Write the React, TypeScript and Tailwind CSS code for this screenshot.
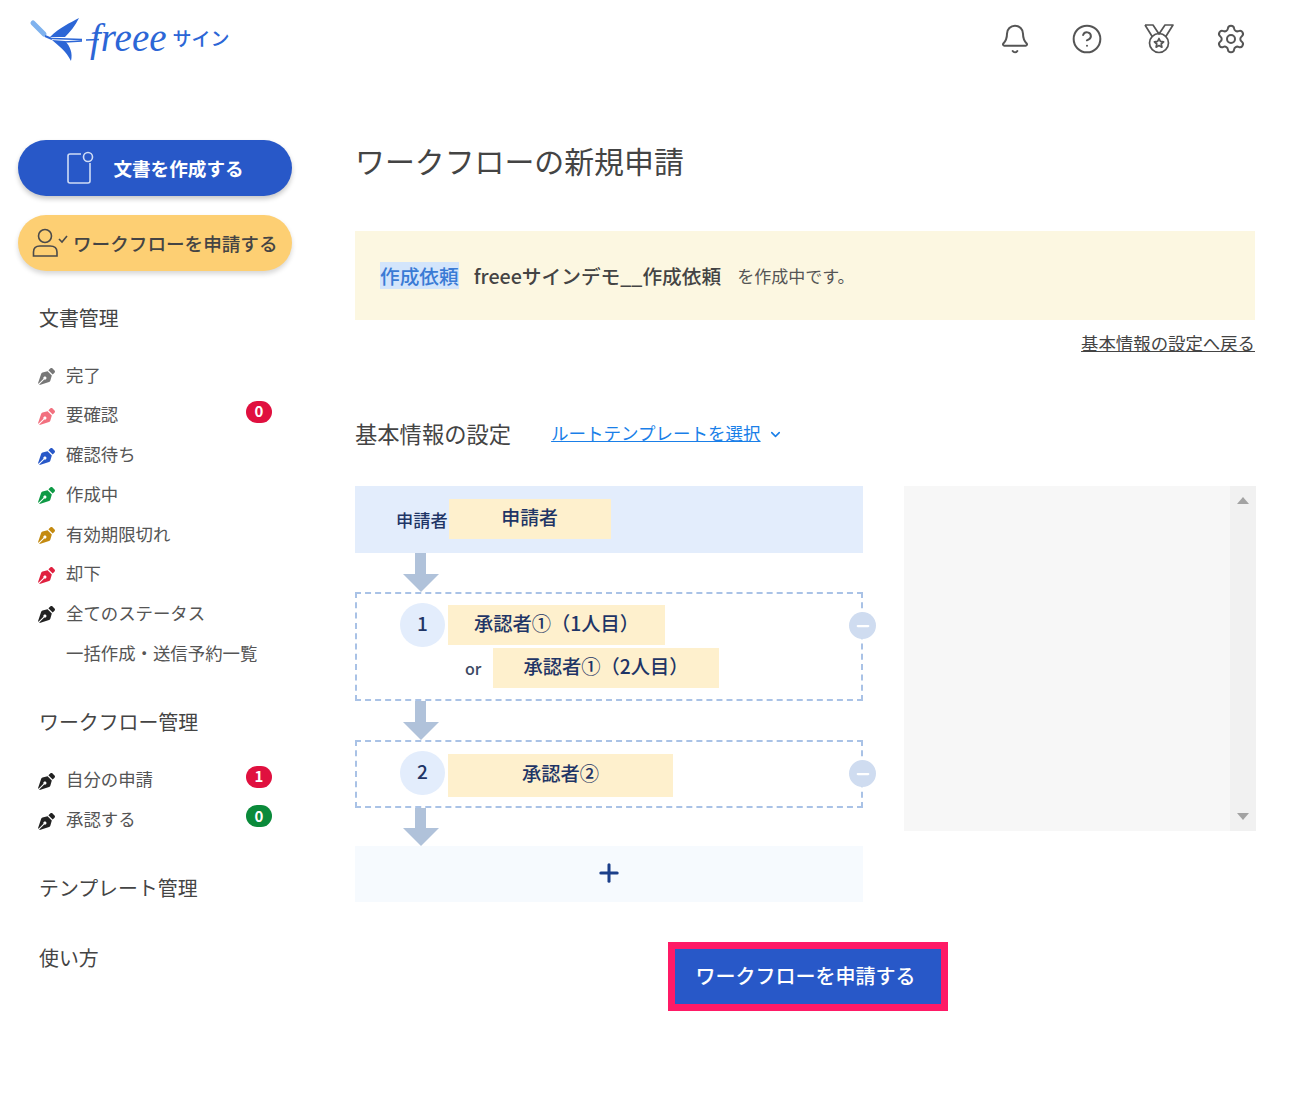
import { Bell, ChevronDown, CircleHelp, Minus, Plus, Settings } from "lucide-react";
import { FaPenNib } from "react-icons/fa";

const jp = "font-['Noto_Sans_CJK_JP','Noto_Sans',sans-serif]";

function Logo() {
  return (
    <div className="flex items-start pl-[28px] pt-[15px]">
      <svg width="72" height="48" viewBox="0 0 72 48" fill="none">
        <path d="M5 8 L16 19" stroke="#7fb2ee" strokeWidth="5" strokeLinecap="round" />
        <path d="M17 21 L24 24" stroke="#2c66d6" strokeWidth="2" />
        <path d="M22 22 C32 12 42 8 51 3 C47 11 42 17 37 22 Z" fill="#2c66d6" />
        <path d="M24 25 C31 31 38 36 43 46 C45 38 42 31 37 26 Z" fill="#2c66d6" />
        <path d="M24 23.5 L54 24.5 M36 27 L54 26 M58 25 L71 24.5" stroke="#2c66d6" strokeWidth="1.4" />
      </svg>
      <div className="-ml-[10px] flex items-center">
        <span className="font-['Liberation_Serif',serif] text-[39px] leading-[46px] italic text-[#2c66d6]">
          freee
        </span>
        <span className={`${jp} ml-[6px] text-[19px] leading-[46px] font-medium text-[#2c66d6]`}>サイン</span>
      </div>
    </div>
  );
}

function MedalIcon() {
  return (
    <svg width="32" height="32" viewBox="0 0 32 32" fill="none" stroke="#555" strokeWidth="1.7" strokeLinejoin="round">
      <path d="M2 2 H10 L16 11 L22 2 H30 L22.5 14 M2 2 L9.5 14" />
      <circle cx="16" cy="20" r="9.5" />
      <path d="M16 15.5 L17.4 18.4 L20.6 18.8 L18.2 21 L18.9 24.2 L16 22.6 L13.1 24.2 L13.8 21 L11.4 18.8 L14.6 18.4 Z" />
    </svg>
  );
}

function Header() {
  return (
    <header className="flex h-[140px] justify-between">
      <Logo />
      <div className="flex gap-[40px] pr-[52px] pt-[23px] text-[#555]">
        <Bell size={32} strokeWidth={1.5} />
        <CircleHelp size={32} strokeWidth={1.5} />
        <MedalIcon />
        <Settings size={32} strokeWidth={1.5} />
      </div>
    </header>
  );
}

function StatusRow({ label, color, badge, badgeColor }: { label: string; color?: string; badge?: string; badgeColor?: string }) {
  return (
    <div className="relative flex h-[39.7px] items-center pl-[38px]">
      <span className="flex w-[28px] justify-start pt-[4px]">
        {color && <FaPenNib size={17} color={color} />}
      </span>
      <span className="text-[17.4px] text-[#555]">{label}</span>
      {badge && (
        <span
          className="absolute left-[246px] top-[6px] flex h-[22px] w-[26px] items-center justify-center rounded-full text-[15px] font-bold text-white"
          style={{ backgroundColor: badgeColor }}
        >
          {badge}
        </span>
      )}
    </div>
  );
}

function SideHeading({ children, className }: { children: string; className: string }) {
  return (
    <div className={`flex h-[40px] items-center pb-[1px] pl-[39px] text-[19.9px] text-[#444] ${className}`}>{children}</div>
  );
}

function Sidebar() {
  return (
    <aside className="w-[355px] shrink-0">
      <div className="ml-[18px] flex h-[56px] w-[274px] items-center justify-center gap-[19px] rounded-full bg-[#2858c8] shadow-[0_3px_5px_rgba(0,0,0,0.22)]">
        <svg width="28" height="34" viewBox="0 0 28 34" fill="none" stroke="#cfdcf5" strokeWidth="1.6">
          <path d="M15 3 H4 Q2 3 2 5 V30 Q2 32 4 32 H22 Q24 32 24 30 V12" />
          <circle cx="22" cy="6" r="4.5" />
        </svg>
        <span className="text-[18.6px] font-bold text-white">文書を作成する</span>
      </div>
      <div className="ml-[18px] mt-[19px] flex h-[56px] w-[274px] items-center gap-[3px] rounded-full bg-[#fdcf73] pl-[14px] shadow-[0_3px_5px_rgba(0,0,0,0.16)]">
        <svg width="38" height="30" viewBox="0 0 38 30" fill="none" stroke="#4a4a4a" strokeWidth="1.6" className="shrink-0">
          <circle cx="13" cy="8" r="6.5" />
          <path d="M1.5 28 V24 Q1.5 18 8 18 H18 Q25 18 25 24 V28 Z" />
          <path d="M27 11 L30 14 L35 8" />
        </svg>
        <span className="whitespace-nowrap text-[18.6px] font-medium text-[#444]">ワークフローを申請する</span>
      </div>
      <SideHeading className="mt-[27px] mb-[17px]">文書管理</SideHeading>
      <StatusRow label="完了" color="#777777" />
      <StatusRow label="要確認" color="#f2707f" badge="0" badgeColor="#e0103f" />
      <StatusRow label="確認待ち" color="#2858c8" />
      <StatusRow label="作成中" color="#0e9a45" />
      <StatusRow label="有効期限切れ" color="#c48a10" />
      <StatusRow label="却下" color="#e0203f" />
      <StatusRow label="全てのステータス" color="#222222" />
      <StatusRow label="一括作成・送信予約一覧" />
      <SideHeading className="mt-[30px] mb-[17px]">ワークフロー管理</SideHeading>
      <StatusRow label="自分の申請" color="#222222" badge="1" badgeColor="#e0103f" />
      <StatusRow label="承認する" color="#222222" badge="0" badgeColor="#0a8a3a" />
      <SideHeading className="mt-[30px]">テンプレート管理</SideHeading>
      <SideHeading className="mt-[30px]">使い方</SideHeading>
    </aside>
  );
}

function Arrow({ height }: { height: string }) {
  return (
    <div className={`flex flex-col items-center ${height} ml-[48px] w-[35px]`}>
      <div className="w-[11px] flex-1 bg-[#b0c2da]" />
      <div className="h-0 w-0 border-x-[18px] border-t-[18px] border-x-transparent border-t-[#b0c2da]" />
    </div>
  );
}

function StepCircle({ n }: { n: string }) {
  return (
    <div className="flex h-[44px] w-[45px] shrink-0 items-center justify-center rounded-full bg-[#e3edfc] pb-[3px] text-[19px] font-medium text-[#1f3566]">
      {n}
    </div>
  );
}

function Approver({ label, width, height }: { label: string; width: string; height: string }) {
  return (
    <div className={`flex items-center justify-center bg-[#fef0cd] pb-[4px] text-[19.3px] font-medium text-[#1f3566] ${width} ${height}`}>
      {label}
    </div>
  );
}

function RemoveButton({ top }: { top: string }) {
  return (
    <div className={`absolute -right-[15px] ${top} flex h-[27px] w-[27px] items-center justify-center rounded-full bg-[#cfdcf0] text-white`}>
      <Minus size={18} strokeWidth={3} />
    </div>
  );
}

function WorkflowRoute() {
  return (
    <div className="w-[508px] shrink-0">
      <div className="flex h-[67px] items-center bg-[#e3edfc] pl-[41px]">
        <span className="text-[17.2px] font-medium text-[#1f3566]">申請者</span>
        <div className="-mt-[1px] ml-px flex h-[40px] w-[162px] items-center justify-center bg-[#fef0cd] pb-[4px] text-[18.9px] font-medium text-[#1f3566]">
          申請者
        </div>
      </div>
      <Arrow height="h-[39px]" />
      <div className="relative h-[109px] border-2 border-dashed border-[#a9c2e6] pl-[43px] pt-[9px]">
        <div className="flex items-start gap-[3px]">
          <StepCircle n="1" />
          <Approver label="承認者①（1人目）" width="w-[217px]" height="mt-[2px] h-[40px]" />
        </div>
        <div className="mt-[1px] flex items-center">
          <span className="ml-[65px] w-[28px] text-[16px] font-medium text-[#3c4a63]">or</span>
          <Approver label="承認者①（2人目）" width="w-[226px]" height="h-[40px]" />
        </div>
        <RemoveButton top="top-[18px]" />
      </div>
      <Arrow height="h-[39px]" />
      <div className="relative h-[68px] border-2 border-dashed border-[#a9c2e6] pl-[43px] pt-[9px]">
        <div className="flex items-start gap-[3px]">
          <StepCircle n="2" />
          <Approver label="承認者②" width="w-[225px]" height="mt-[3px] h-[43px]" />
        </div>
        <RemoveButton top="top-[18px]" />
      </div>
      <Arrow height="h-[38px]" />
      <div className="flex h-[56px] items-center justify-center bg-[#f6fafe] pb-[2px] text-[#1b3f8a]">
        <Plus size={28} strokeWidth={2.6} />
      </div>
    </div>
  );
}

function PreviewPanel() {
  return (
    <div className="flex h-[345px] w-[352px] bg-[#f7f7f7]">
      <div className="flex-1" />
      <div className="flex w-[26px] flex-col items-center justify-between bg-[#f1f1f1] py-[11px]">
        <div className="h-0 w-0 border-x-[6px] border-b-[7px] border-x-transparent border-b-[#a3a3a3]" />
        <div className="h-0 w-0 border-x-[6px] border-t-[7px] border-x-transparent border-t-[#a3a3a3]" />
      </div>
    </div>
  );
}

function Main() {
  return (
    <main className="w-[901px] shrink-0">
      <h1 className="flex h-[42px] items-center pb-[1px] text-[29.9px] text-[#444]">ワークフローの新規申請</h1>
      <div className="mt-[49px] mr-px flex h-[89px] items-center bg-[#fcf7e1] pl-[25px]">
        <span className="bg-[#d3e5fb] text-[19.7px] leading-[27px] font-medium text-[#3a7bd5]">作成依頼</span>
        <span className="ml-[15px] text-[19.7px] font-medium text-[#444]">freeeサインデモ__作成依頼</span>
        <span className="ml-[16px] text-[17px] text-[#555]">を作成中です。</span>
      </div>
      <div className="mt-[12px] mr-px flex h-[24px] items-center justify-end">
        <a className="pb-[2px] text-[17.4px] text-[#444] underline">基本情報の設定へ戻る</a>
      </div>
      <div className="mt-[64px] flex h-[30px] items-center">
        <h2 className="pb-[2px] text-[22.3px] text-[#444]">基本情報の設定</h2>
        <a className="ml-[40px] pb-[3px] text-[17.5px] text-[#1a7fe8] underline">ルートテンプレートを選択</a>
        <ChevronDown className="mb-[2px] ml-[7px] text-[#1a7fe8]" size={15} strokeWidth={2.5} />
      </div>
      <div className="mt-[36px] flex gap-[41px]">
        <WorkflowRoute />
        <PreviewPanel />
      </div>
      <button
        type="button"
        className="ml-[313px] mt-[40px] flex h-[69px] w-[280px] items-center justify-center border-[7px] border-[#ff1a66] bg-[#2858c8] pb-[2px] pr-[5px] text-[20px] font-medium text-white"
      >
        ワークフローを申請する
      </button>
    </main>
  );
}

export default function App() {
  return (
    <div className={`${jp} h-[1097px] w-[1299px] overflow-hidden bg-white`}>
      <Header />
      <div className="flex">
        <Sidebar />
        <Main />
      </div>
    </div>
  );
}
